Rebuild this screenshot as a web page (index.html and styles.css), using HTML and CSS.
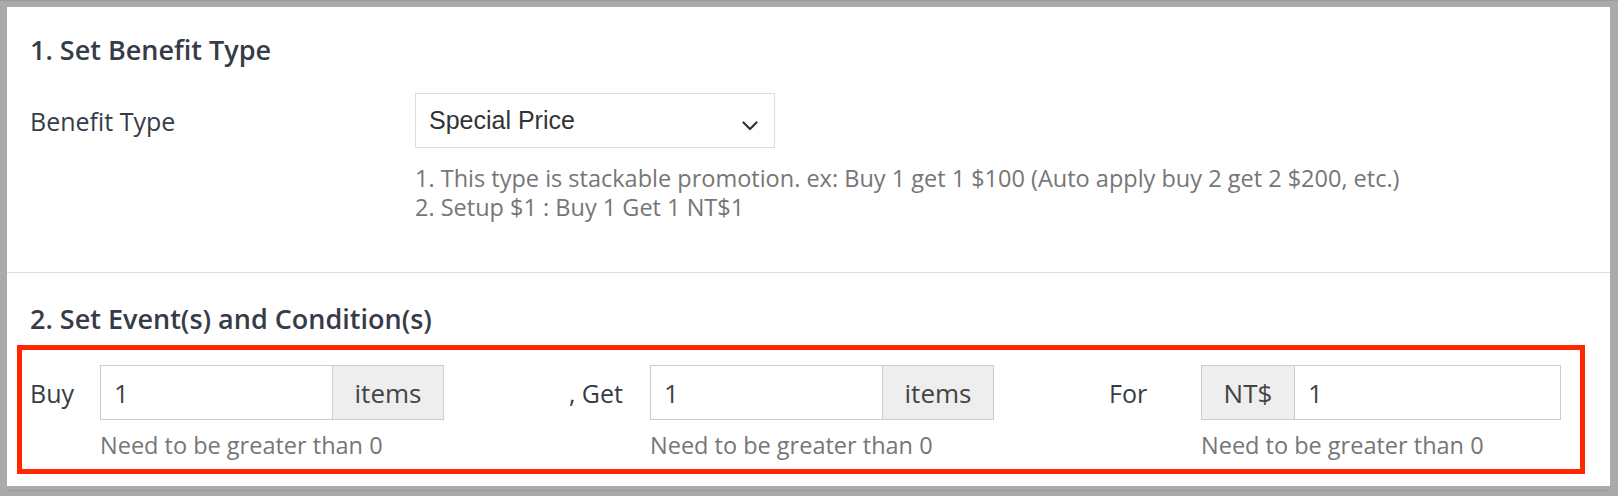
FILE: index.html
```html
<!DOCTYPE html>
<html lang="en">
<head>
  <meta charset="UTF-8" />
  <meta name="viewport" content="width=device-width, initial-scale=1.0" />
  <title>Promotion Settings</title>
  <link rel="stylesheet" href="styles.css">
</head>
<body>
  <div class="panel">
    <section class="block block-benefit">
      <h2 class="block-title">1. Set Benefit Type</h2>
      <div class="form-row">
        <label class="form-label">Benefit Type</label>
        <div class="form-field">
          <div class="select-box">
            <span class="select-value">Special Price</span>
            <svg class="chevron" width="16" height="10" viewBox="0 0 16 10">
              <path d="M1.5 1.5 L8 8 L14.5 1.5" fill="none" stroke="#333" stroke-width="2.2" stroke-linecap="round" stroke-linejoin="round"/>
            </svg>
          </div>
          <div class="hint">
            <p>1. This type is stackable promotion. ex: Buy 1 get 1 $100 (Auto apply buy 2 get 2 $200, etc.)</p>
            <p>2. Setup $1 : Buy 1 Get 1 NT$1</p>
          </div>
        </div>
      </div>
    </section>

    <section class="block block-event">
      <h2 class="block-title">2. Set Event(s) and Condition(s)</h2>
      <div class="conditions">
        <div class="cond cond-buy">
          <label class="cond-label">Buy</label>
          <div class="cond-field">
            <div class="input-group">
              <input type="text" value="1">
              <span class="addon addon-after">items</span>
            </div>
            <p class="cond-hint">Need to be greater than 0</p>
          </div>
        </div>

        <div class="cond cond-get">
          <label class="cond-label">, Get</label>
          <div class="cond-field">
            <div class="input-group">
              <input type="text" value="1">
              <span class="addon addon-after">items</span>
            </div>
            <p class="cond-hint">Need to be greater than 0</p>
          </div>
        </div>

        <div class="cond cond-for">
          <label class="cond-label">For</label>
          <div class="cond-field">
            <div class="input-group">
              <span class="addon addon-before">NT$</span>
              <input type="text" value="1">
            </div>
            <p class="cond-hint">Need to be greater than 0</p>
          </div>
        </div>
      </div>
    </section>
  </div>
</body>
</html>
```

FILE: styles.css
```css
:root {
  --frame: #aaaaaa;
  --text: #363c47;
  --muted: #767676;
  --line: #cccccc;
  --addon: #eeeeee;
  --mark: #ff2600;
}

* {
  box-sizing: border-box;
  margin: 0;
  padding: 0;
  font-family: 'Open Sans', sans-serif;
}

body {
  background: var(--frame);
  border-top: 1px solid #9a9a9a;
  width: 1618px;
  height: 496px;
  overflow: hidden;
}

.panel {
  background: #ffffff;
  margin: 6px 8px 0 7px;
  height: 479px;
  box-shadow: 0 4px 0 var(--frame), 0 5px 0 #999999;
}

.block-title {
  font-size: 27px;
  font-weight: 600;
  line-height: 33px;
  color: var(--text);
}

/* section 1 */
.block-benefit {
  padding: 26px 23px 50px;
  border-bottom: 1px solid #dddddd;
}

.form-row {
  display: flex;
  margin-top: 27px;
}

.form-label {
  width: 385px;
  font-size: 25px;
  line-height: 29px;
  padding-top: 14px;
  color: var(--text);
}

.select-box {
  width: 360px;
  height: 55px;
  border: 1px solid #dddddd;
  display: flex;
  align-items: center;
  justify-content: space-between;
  padding: 0 16px 0 13px;
}

.select-value {
  font-family: 'Liberation Sans', Arial, sans-serif;
  font-size: 25px;
  color: #333333;
}

.chevron {
  margin-top: 10px;
}

.hint {
  margin-top: 16px;
  font-size: 23.5px;
  line-height: 29px;
  color: var(--muted);
}

/* section 2 */
.block-event {
  padding-top: 29px;
}

.block-event .block-title {
  padding-left: 23px;
}

.conditions {
  display: flex;
  margin: 10px 25px 0 10px;
  border: 5px solid var(--mark);
  padding: 15px 0 9px 8px;
}

.cond {
  display: flex;
  align-items: flex-start;
}

.cond-label {
  height: 55px;
  line-height: 57px;
  font-size: 25px;
  color: var(--text);
}

.cond-buy .cond-label {
  width: 70px;
}

.cond-get .cond-label {
  width: 206px;
  text-align: right;
  padding-right: 27px;
}

.cond-for .cond-label {
  width: 207px;
  padding-left: 115px;
}

.cond-buy .cond-field,
.cond-get .cond-field {
  width: 344px;
}

.cond-for .cond-field {
  width: 360px;
}

.input-group {
  display: flex;
  height: 55px;
  border: 1px solid var(--line);
}

.input-group input {
  flex: 1;
  min-width: 0;
  border: none;
  outline: none;
  padding-left: 13px;
  font-size: 26px;
  color: #444444;
  background: #ffffff;
}

.addon {
  display: flex;
  align-items: center;
  justify-content: center;
  background: var(--addon);
  font-size: 26px;
  color: #444444;
}

.addon-after {
  width: 111px;
  border-left: 1px solid var(--line);
}

.addon-before {
  width: 93px;
  border-right: 1px solid var(--line);
}

.cond-hint {
  margin-top: 11px;
  font-size: 23.5px;
  line-height: 29px;
  color: var(--muted);
}
```
